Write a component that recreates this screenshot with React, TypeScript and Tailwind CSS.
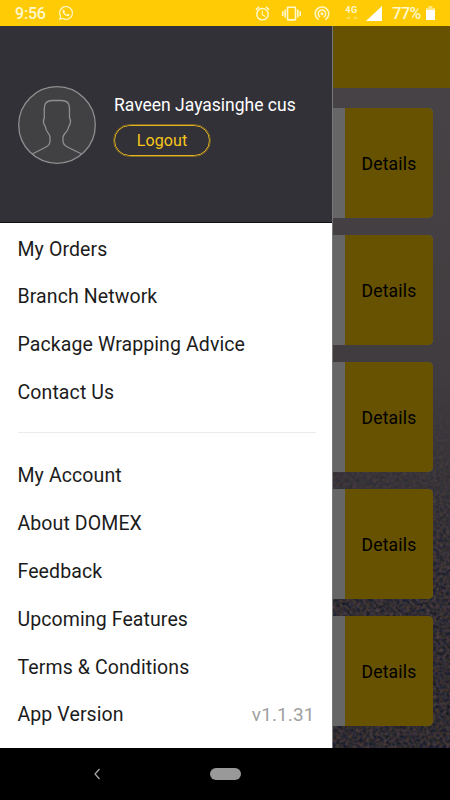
import React from "react";
import { FaWhatsapp } from "react-icons/fa";
import { MdAlarm, MdVibration, MdWifiTethering } from "react-icons/md";

const primaryItems = ["My Orders", "Branch Network", "Package Wrapping Advice", "Contact Us"];
const secondaryItems = ["My Account", "About DOMEX", "Feedback", "Upcoming Features", "Terms & Conditions"];

function StatusBar() {
  return (
    <header className="flex h-[26px] shrink-0 items-center bg-[#ffcb05] pl-[15px] pr-[15px] text-[#fff8cf]">
      <span className="mt-[2px] text-[16px] font-medium leading-none tracking-[-0.200px]">9:56</span>
      <FaWhatsapp className="ml-[12px] size-[16px]" />
      <MdAlarm className="ml-auto size-[17px]" />
      <MdVibration className="ml-[11px] size-[19px]" />
      <MdWifiTethering className="ml-[12px] size-[18px]" />
      <div className="ml-[14px] flex w-[14px] flex-col">
        <span className="text-[9px] font-bold leading-[9px] tracking-[0.500px]">4G</span>
        <svg viewBox="0 0 14 6" className="h-[6px] w-[14px] opacity-40" fill="currentColor">
          <path d="M1 2h5L3.500 5zM8 4h5l-2.500-3z" />
        </svg>
      </div>
      <svg viewBox="0 0 16 15" className="ml-[7px] h-[15px] w-[16px] text-white">
        <path d="M16 0v15H0z" fill="currentColor" />
      </svg>
      <span className="ml-[10px] mt-[2px] text-[16px] font-medium leading-none tracking-[-0.400px]">77%</span>
      <svg viewBox="0 0 9 14" className="ml-[5px] h-[14px] w-[9px]">
        <path d="M2.500 0h4v2H9v12H0V2h2.500z" fill="#ffe680" />
        <path d="M0 4h9v10H0z" fill="#fff" />
      </svg>
    </header>
  );
}

function Asphalt() {
  return (
    <svg className="absolute inset-0 h-full w-full" preserveAspectRatio="none" viewBox="0 0 450 722">
      <defs>
        <linearGradient id="sky" x1="0" y1="0" x2="0" y2="1">
          <stop offset="0" stopColor="#b1a9b0" />
          <stop offset="0.4" stopColor="#a69ba2" />
          <stop offset="0.62" stopColor="#958a93" />
          <stop offset="0.78" stopColor="#7d7582" />
          <stop offset="1" stopColor="#6d6670" />
        </linearGradient>
        <linearGradient id="fade" x1="0" y1="0" x2="0" y2="1">
          <stop offset="0.5" stopColor="#000" />
          <stop offset="0.78" stopColor="#fff" />
        </linearGradient>
        <mask id="ground">
          <rect width="450" height="722" fill="url(#fade)" />
        </mask>
        <filter id="grit" x="0" y="0" width="100%" height="100%" colorInterpolationFilters="sRGB">
          <feTurbulence type="fractalNoise" baseFrequency="0.3" numOctaves="3" seed="7" />
          <feColorMatrix values="1.500 0 0 0 -0.260  0.900 0.300 0 0 -0.160  0.400 0.200 0.700 0 -0.140  0 0 0 0 1" />
        </filter>
      </defs>
      <rect width="450" height="722" fill="url(#sky)" />
      <g mask="url(#ground)">
        <rect width="450" height="722" filter="url(#grit)" opacity="0.6" />
      </g>
    </svg>
  );
}

function OrderCard() {
  return (
    <article className="flex h-[110px] overflow-hidden rounded-[5px] bg-white">
      <div className="flex-1" />
      <div className="flex w-[88px] items-center justify-center bg-[#ffcc00] pt-[2px] text-[17.500px] tracking-[0.200px] text-black">
        Details
      </div>
    </article>
  );
}

function OrdersPage() {
  return (
    <div className="relative h-full overflow-hidden">
      <Asphalt />
      <div className="relative flex h-full flex-col">
        <div className="h-[62px] shrink-0 bg-[#ffcc00]" />
        <div className="flex flex-col gap-[17.100px] pl-[17px] pr-[17px] pt-[20px]">
          {[1, 2, 3, 4, 5].map((id) => (
            <OrderCard key={id} />
          ))}
        </div>
      </div>
      <div className="absolute inset-0 bg-black/60" />
    </div>
  );
}

function Avatar() {
  return (
    <svg viewBox="0 0 78 78" className="size-[78px] shrink-0" fill="none" stroke="#8f8f92" strokeWidth="1.300">
      <circle cx="39" cy="39" r="38.300" fill="#414143" />
      <path d="M14.300 68 28 61C31 59.500 32 58 32 55V51C32 48 27.800 46 27.300 40.500C25.500 39 24.800 34 26.300 32V22C26.300 17 29.500 14.500 34.500 14.500H43.500C48.500 14.500 51.500 17 51.500 22V32C53.200 34 52.500 39 50.700 40.500C50.200 46 45 48 45 51V55C45 58 46.500 59.500 49.500 61L63.600 68" />
    </svg>
  );
}

function MenuItem({ label, value }: { label: string; value?: string }) {
  return (
    <li className="flex h-[47.950px] items-center justify-between text-[19.500px] tracking-[0.100px] text-[#1c1c1c]">
      <span>{label}</span>
      {value && <span className="pr-px text-[19px] text-[#a0a0a0]">{value}</span>}
    </li>
  );
}

function Drawer() {
  return (
    <aside className="absolute inset-y-0 left-0 flex w-[333px] flex-col border-r border-[#777] bg-white">
      <div className="flex h-[197px] shrink-0 items-center gap-[18px] border-b border-[#111114] bg-[#313137] pl-[18px] pt-[2px]">
        <Avatar />
        <div className="flex flex-col items-start">
          <span className="text-[17.500px] leading-[22px] text-white">Raveen Jayasinghe cus</span>
          <button className="mt-[9px] h-[31px] w-[96px] rounded-full border-[1.500px] border-[#e6b420] pt-px text-[16px] leading-none tracking-[0.100px] text-[#f8c61b] outline outline-[0.500px] outline-[#7d6725]">
            Logout
          </button>
        </div>
      </div>
      <nav className="pl-[17.500px] pr-[16.500px] pt-[2.200px]">
        <ul>
          {primaryItems.map((label) => (
            <MenuItem key={label} label={label} />
          ))}
        </ul>
        <hr className="mb-[18.500px] mt-[15px] border-[#ebebeb]" />
        <ul>
          {secondaryItems.map((label) => (
            <MenuItem key={label} label={label} />
          ))}
          <MenuItem label="App Version" value="v1.1.31" />
        </ul>
      </nav>
    </aside>
  );
}

export default function App() {
  return (
    <div className="flex h-[800px] w-[450px] flex-col overflow-hidden bg-black font-['Roboto',sans-serif]">
      <StatusBar />
      <main className="relative h-[722px] shrink-0 overflow-hidden">
        <OrdersPage />
        <Drawer />
      </main>
      <footer className="flex h-[52px] items-center pl-[94px]">
        <svg viewBox="0 0 6 12" className="h-[12px] w-[6px]" fill="none" stroke="#a5a5a5" strokeWidth="1.300">
          <path d="M5.500 1 1 6l4.500 5" />
        </svg>
        <div className="ml-[109.500px] h-[11.500px] w-[31px] rounded-full bg-[#999]" />
      </footer>
    </div>
  );
}
